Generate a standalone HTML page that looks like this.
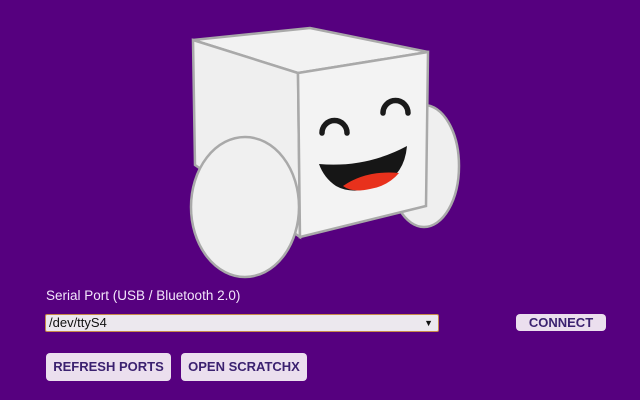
<!DOCTYPE html>
<html><head><meta charset="utf-8"><style>
html,body{margin:0;padding:0}
body{width:640px;height:400px;background:#56007f;position:relative;overflow:hidden;font-family:"Liberation Sans",sans-serif}
.lbl{position:absolute;left:46px;top:288px;color:#f3e6fb;font-size:13.5px}
.sel{position:absolute;left:45px;top:314px;width:389px;height:16px;border:1.5px solid #c8894a;background:#ece8ee;border-radius:2px;font-size:13px;line-height:16px;color:#111;padding-left:3px;box-sizing:content-box}
.sel span{position:absolute;right:5px;top:0;font-size:9px}
.btn{position:absolute;background:#ebdfee;color:#3b2270;font-weight:bold;font-size:13px;text-align:center;border-radius:4px}
</style></head><body>
<svg width="640" height="400" style="position:absolute;left:0;top:0">
<g stroke="#a9a9a9" stroke-width="2.5">
<ellipse cx="424" cy="166" rx="35" ry="61" fill="#efefef"/>
<polygon points="193,40 310,28 428,52 298,73" fill="#f2f2f2"/>
<polygon points="193,40 298,73 300,237 195,165" fill="#efefef"/>
<polygon points="298,73 428,52 426,206 300,237" fill="#f3f3f3"/>
<ellipse cx="245" cy="207" rx="54" ry="70" fill="#f0f0f0"/>
</g>
<g fill="none" stroke="#1a1a1a" stroke-width="5.5" stroke-linecap="round">
<path d="M322,133 A12.5,12.5 0 0 1 347,133"/>
<path d="M383,113 A12.5,12.5 0 0 1 408,113"/>
</g>
<path d="M319,164 Q366,168 407,146 Q404,180 372,188 Q350,194 336,186 Q324,178 319,164 Z" fill="#161616"/>
<path d="M343,186 Q366,170 399,173 Q388,186 370,189 Q352,193 343,186 Z" fill="#e8311c"/>
</svg>
<div class="lbl">Serial Port (USB / Bluetooth 2.0)</div>
<div class="sel">/dev/ttyS4<span>▼</span></div>
<div class="btn" style="left:516px;top:314px;width:90px;height:17px;line-height:17px">CONNECT</div>
<div class="btn" style="left:46px;top:353px;width:125px;height:28px;line-height:28px">REFRESH PORTS</div>
<div class="btn" style="left:181px;top:353px;width:126px;height:28px;line-height:28px">OPEN SCRATCHX</div>
</body></html>
